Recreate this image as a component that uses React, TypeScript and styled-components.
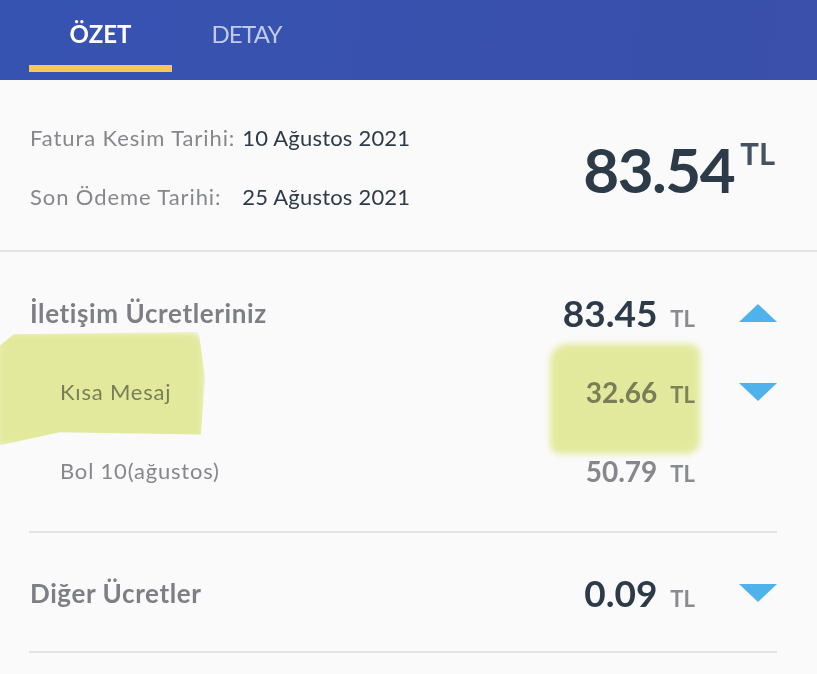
import React from "react";
import styled, { createGlobalStyle } from "styled-components";

const GlobalStyle = createGlobalStyle`
  body {
    margin: 0;
    background: #fafafa;
    font-family: "Lato", "Noto Sans", sans-serif;
  }
`;

const Header = styled.div`
  height: 80px;
  background: linear-gradient(100deg, #3753b2 0%, #3a50aa 100%);
  display: flex;
  padding-left: 29px;
`;

const Tab = styled.div<{ $active?: boolean }>`
  width: 143px;
  height: 80px;
  box-sizing: border-box;
  display: flex;
  flex-direction: column;
  align-items: center;
  padding-top: 19px;
  padding-left: ${(p) => (p.$active ? 0 : 6)}px;
  font-size: 24px;
  font-weight: ${(p) => (p.$active ? 700 : 400)};
  color: ${(p) => (p.$active ? "#ffffff" : "#c3cbea")};
  letter-spacing: ${(p) => (p.$active ? 0 : -0.8)}px;
  position: relative;

  &::after {
    content: "";
    display: ${(p) => (p.$active ? "block" : "none")};
    position: absolute;
    left: 0;
    right: 0;
    bottom: 8px;
    height: 7px;
    background: #f5c952;
  }
`;

const Summary = styled.div`
  height: 172px;
  box-sizing: border-box;
  border-bottom: 2px solid #e3e3e3;
  display: flex;
  justify-content: space-between;
  padding: 43px 42px 0 30px;
`;

const Dates = styled.div`
  display: grid;
  grid-template-columns: auto auto;
  column-gap: 7px;
  row-gap: 29px;
  align-content: start;
  font-size: 22px;
  line-height: 30px;
`;

const DateLabel = styled.span`
  color: #86878c;
  letter-spacing: 0.9px;
`;

const DateValue = styled.span`
  color: #2e3a48;
  letter-spacing: 0.2px;
`;

const Total = styled.div`
  display: flex;
  align-items: flex-start;
  color: #2d3a48;
  padding-top: 15px;
`;

const TotalNumber = styled.span`
  font-size: 62px;
  font-weight: 700;
  letter-spacing: -1.5px;
  line-height: 1;
`;

const TotalUnit = styled.span`
  font-size: 31px;
  font-weight: 700;
  color: #46525f;
  margin-left: 6px;
  line-height: 1;
`;

const Group = styled.div<{ $top: number; $bottom: number }>`
  position: relative;
  margin: 0 40px 0 29px;
  padding: ${(p) => p.$top}px 0 ${(p) => p.$bottom}px;
  border-bottom: 2px solid #e3e3e3;
`;

const Row = styled.div`
  height: 79px;
  display: grid;
  grid-template-columns: 1fr auto 82px;
  align-items: center;
`;

const Title = styled.span<{ $sub?: boolean }>`
  padding-left: ${(p) => (p.$sub ? 31 : 1)}px;
  font-size: ${(p) => (p.$sub ? 22 : 26)}px;
  font-weight: ${(p) => (p.$sub ? 400 : 700)};
  color: ${(p) => (p.$sub ? "#86878c" : "#7e7f84")};
  letter-spacing: ${(p) => (p.$sub ? 0.8 : 0.6)}px;
`;

const Amount = styled.span<{ $sub?: boolean }>`
  display: flex;
  align-items: baseline;
  gap: 13px;
  font-size: ${(p) => (p.$sub ? 28 : 37)}px;
  font-weight: 700;
  color: ${(p) => (p.$sub ? "#86878c" : "#2d3a48")};
`;

const Unit = styled.span`
  font-size: 22px;
  font-weight: 700;
  color: #8a8b90;
`;

const Arrow = styled.span<{ $up?: boolean }>`
  justify-self: end;
  width: 0;
  height: 0;
  border-left: 19.5px solid transparent;
  border-right: 19.5px solid transparent;
  ${(p) =>
    p.$up
      ? "border-bottom: 18px solid #4fb2ea;"
      : "border-top: 18px solid #4fb2ea;"}
`;

const Marker = styled.div`
  position: absolute;
  pointer-events: none;
  background: rgba(213, 224, 80, 0.55);
  mix-blend-mode: multiply;
  filter: blur(3px);
`;

const MarkerLeft = styled(Marker)`
  left: -32px;
  top: 80px;
  width: 208px;
  height: 114px;
  border-radius: 10px 16px 12px 4px;
  clip-path: polygon(0 14%, 8% 2%, 97% 0, 100% 40%, 98% 90%, 30% 88%, 0 100%);
`;

const MarkerRight = styled(Marker)`
  left: 521px;
  top: 92px;
  width: 150px;
  height: 110px;
  border-radius: 18px 10px 14px 10px;
`;

type Item = {
  title: string;
  amount: string;
  sub?: boolean;
  arrow?: "up" | "down";
};

const contact: Item[] = [
  { title: "İletişim Ücretleriniz", amount: "83.45", arrow: "up" },
  { title: "Kısa Mesaj", amount: "32.66", sub: true, arrow: "down" },
  { title: "Bol 10(ağustos)", amount: "50.79", sub: true },
];

const other: Item[] = [
  { title: "Diğer Ücretler", amount: "0.09", arrow: "down" },
];

const ItemRow = ({ item }: { item: Item }) => (
  <Row>
    <Title $sub={item.sub}>{item.title}</Title>
    <Amount $sub={item.sub}>
      {item.amount}
      <Unit>TL</Unit>
    </Amount>
    {item.arrow ? <Arrow $up={item.arrow === "up"} /> : <span />}
  </Row>
);

export default function App() {
  return (
    <>
      <GlobalStyle />
      <Header>
        <Tab $active>ÖZET</Tab>
        <Tab>DETAY</Tab>
      </Header>
      <Summary>
        <Dates>
          <DateLabel>Fatura Kesim Tarihi:</DateLabel>
          <DateValue>10 Ağustos 2021</DateValue>
          <DateLabel>Son Ödeme Tarihi:</DateLabel>
          <DateValue>25 Ağustos 2021</DateValue>
        </Dates>
        <Total>
          <TotalNumber>83.54</TotalNumber>
          <TotalUnit>TL</TotalUnit>
        </Total>
      </Summary>
      <Group $top={21} $bottom={21}>
        {contact.map((item) => (
          <ItemRow key={item.title} item={item} />
        ))}
        <MarkerLeft />
        <MarkerRight />
      </Group>
      <Group $top={20} $bottom={19}>
        {other.map((item) => (
          <ItemRow key={item.title} item={item} />
        ))}
      </Group>
    </>
  );
}
